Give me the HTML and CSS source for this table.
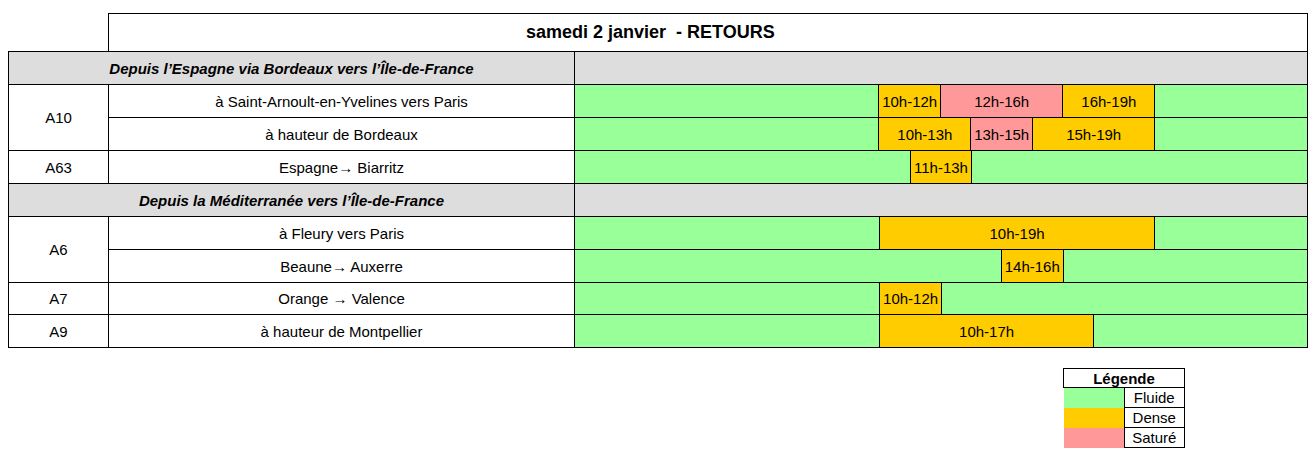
FILE: index.html
```html
<!DOCTYPE html>
<html lang="fr">
<head>
<meta charset="utf-8">
<title>samedi 2 janvier - RETOURS</title>
<link rel="stylesheet" href="styles.css">
</head>
<body>
<table class="plan">
  <colgroup><col class="c-road"><col class="c-place"><col class="c-time"></colgroup>
  <tr class="r-title">
    <td class="blank"></td>
    <td colspan="2" class="title">samedi 2 janvier&nbsp; - RETOURS</td>
  </tr>
  <tr class="r-row">
    <td colspan="2" class="section">Depuis l’Espagne via Bordeaux vers l’Île-de-France</td>
    <td class="section"></td>
  </tr>
  <tr class="r-row">
    <td rowspan="2" class="road">A10</td>
    <td class="place">à Saint-Arnoult-en-Yvelines vers Paris</td>
    <td class="time"><div class="bar">
      <span class="seg fluide" style="flex-grow:10"></span>
      <span class="seg dense" style="flex-grow:2">10h-12h</span>
      <span class="seg sature" style="flex-grow:4">12h-16h</span>
      <span class="seg dense" style="flex-grow:3">16h-19h</span>
      <span class="seg fluide" style="flex-grow:5"></span>
    </div></td>
  </tr>
  <tr class="r-row">
    <td class="place">à hauteur de Bordeaux</td>
    <td class="time"><div class="bar">
      <span class="seg fluide" style="flex-grow:10"></span>
      <span class="seg dense" style="flex-grow:3">10h-13h</span>
      <span class="seg sature" style="flex-grow:2">13h-15h</span>
      <span class="seg dense" style="flex-grow:4">15h-19h</span>
      <span class="seg fluide" style="flex-grow:5"></span>
    </div></td>
  </tr>
  <tr class="r-row">
    <td class="road">A63</td>
    <td class="place">Espagne→ Biarritz</td>
    <td class="time"><div class="bar">
      <span class="seg fluide" style="flex-grow:11"></span>
      <span class="seg dense" style="flex-grow:2">11h-13h</span>
      <span class="seg fluide" style="flex-grow:11"></span>
    </div></td>
  </tr>
  <tr class="r-row">
    <td colspan="2" class="section">Depuis la Méditerranée vers l’Île-de-France</td>
    <td class="section"></td>
  </tr>
  <tr class="r-row">
    <td rowspan="2" class="road">A6</td>
    <td class="place">à Fleury vers Paris</td>
    <td class="time"><div class="bar">
      <span class="seg fluide" style="flex-grow:10"></span>
      <span class="seg dense" style="flex-grow:9">10h-19h</span>
      <span class="seg fluide" style="flex-grow:5"></span>
    </div></td>
  </tr>
  <tr class="r-row">
    <td class="place">Beaune→ Auxerre</td>
    <td class="time"><div class="bar">
      <span class="seg fluide" style="flex-grow:14"></span>
      <span class="seg dense" style="flex-grow:2">14h-16h</span>
      <span class="seg fluide" style="flex-grow:8"></span>
    </div></td>
  </tr>
  <tr class="r-row r-short">
    <td class="road">A7</td>
    <td class="place">Orange → Valence</td>
    <td class="time"><div class="bar">
      <span class="seg fluide" style="flex-grow:10"></span>
      <span class="seg dense" style="flex-grow:2">10h-12h</span>
      <span class="seg fluide" style="flex-grow:12"></span>
    </div></td>
  </tr>
  <tr class="r-row">
    <td class="road">A9</td>
    <td class="place">à hauteur de Montpellier</td>
    <td class="time"><div class="bar">
      <span class="seg fluide" style="flex-grow:10"></span>
      <span class="seg dense" style="flex-grow:7">10h-17h</span>
      <span class="seg fluide" style="flex-grow:7"></span>
    </div></td>
  </tr>
</table>

<div class="legend-wrap">
  <table class="legend">
    <tr><th colspan="2">Légende</th></tr>
    <tr><td class="swatch fluide"></td><td class="lbl">Fluide</td></tr>
    <tr><td class="swatch dense"></td><td class="lbl">Dense</td></tr>
    <tr><td class="swatch sature"></td><td class="lbl">Saturé</td></tr>
  </table>
</div>
</body>
</html>
```

FILE: styles.css
```css
* { box-sizing: border-box; }

body {
  margin: 13px 8px 8px 8px;
  font-family: "Liberation Sans", Arial, sans-serif;
  font-size: 15px;
  color: #000;
  background: #fff;
}

.plan {
  border-collapse: collapse;
  table-layout: fixed;
  width: 1299px;
}

.c-road { width: 100px; }
.c-place { width: 466px; }
.c-time { width: 733px; }

.plan td {
  border: 1px solid #000;
  padding: 0;
  text-align: center;
  vertical-align: middle;
  line-height: 17px;
}

.plan td.blank { border: none; }

.r-title td { height: 38px; }
.r-row td { height: 33px; }
.r-short td { height: 32px; }
.r-short .bar { height: 31px; }

.title {
  font-weight: bold;
  font-size: 18px;
  text-align: left !important;
  padding-left: 417px !important;
}

.section {
  background: #dddddd;
  font-weight: bold;
  font-style: italic;
}

.time { background: #99ff99; }

.bar {
  display: flex;
  height: 32px;
}

.seg {
  flex-basis: 0;
  flex-shrink: 1;
  display: flex;
  align-items: center;
  justify-content: center;
  white-space: nowrap;
  overflow: hidden;
}

.seg + .seg { border-left: 1px solid #000; }

.fluide { background: #99ff99; }
.dense { background: #ffcc00; }
.sature { background: #ff9999; }

.legend-wrap {
  display: flex;
  justify-content: flex-end;
  margin-top: 20px;
  padding-right: 123px;
}

.legend {
  border-collapse: collapse;
  table-layout: fixed;
  width: 122px;
}

.legend th {
  font-weight: bold;
  font-size: 15px;
  height: 19px;
  padding: 0;
  border: 1px solid #000;
  line-height: 17px;
}

.legend td {
  height: 20px;
  padding: 0;
  width: 61px;
  line-height: 18px;
}

.legend .lbl {
  border: 1px solid #000;
  text-align: center;
}
```
